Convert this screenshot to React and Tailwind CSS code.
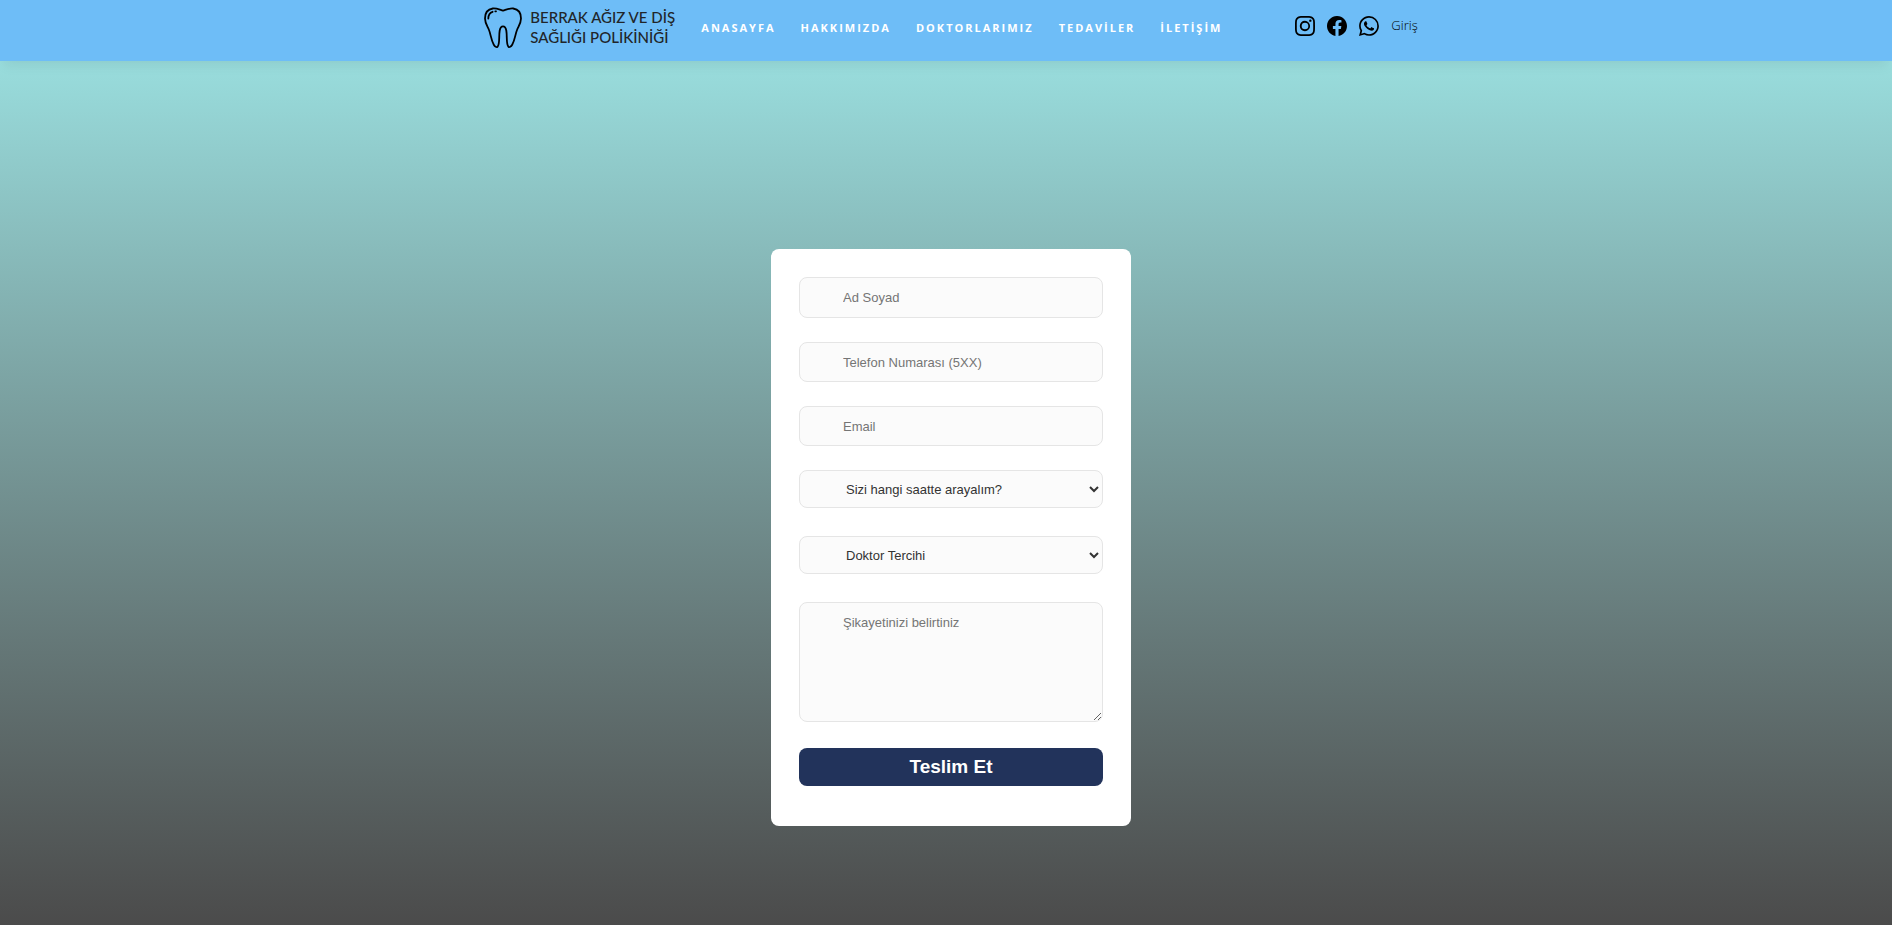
import { BsInstagram, BsFacebook, BsWhatsapp } from "react-icons/bs";

const links = ["ANASAYFA", "HAKKIMIZDA", "DOKTORLARIMIZ", "TEDAVİLER", "İLETİŞİM"];

const socials = [
  { label: "Instagram", Icon: BsInstagram },
  { label: "Facebook", Icon: BsFacebook },
  { label: "WhatsApp", Icon: BsWhatsapp },
];

const box = "w-full rounded-lg border border-[#e5e5e5] bg-[#fbfbfb] text-[13px] outline-none";
const field = `${box} px-[43px] placeholder:text-[#757575]`;
const picker = `${box} h-[38px] pl-[42px] text-[#333]`;

function Tooth() {
  return (
    <svg viewBox="0 0 38 42" className="h-[42px] w-[38px]" fill="none" stroke="#000" strokeWidth="1.8" strokeLinecap="round" strokeLinejoin="round" aria-hidden="true">
      <path d="M19 3.6C15.500 2.600 12 1.100 8.800 1.500C4 2.200 1 6 1 11.500C1 16 3.200 19 4.800 22.500C6.800 27 7 33 9.800 37.700C11 39.800 12.500 40.600 13.600 39.700C16 37.500 14.700 29 15.700 23.500C16.200 20.800 17.500 19.300 19 19.300C20.500 19.300 21.800 20.800 22.300 23.500C23.300 29 22 37.500 24.400 39.700C25.500 40.600 27 39.800 28.200 37.700C31 33 31.200 27 33.200 22.500C34.800 19 37 16 37 11.500C37 6 34 2.200 29.200 1.500C26 1.100 22.500 2.600 19 3.600Z" />
      <path d="M4.300 11.500C4.300 8 6 5.700 8.600 4.800M11.300 4.300L12 4.400" />
    </svg>
  );
}

function Header() {
  return (
    <header className="relative flex h-[61px] justify-center bg-[#6ebdf7] pl-[10px] shadow-[0_8px_12px_-4px_rgba(0,0,0,0.08)]">
      <div className="flex items-start">
        <a href="#" className="flex w-[217px] gap-2 pt-[7px] text-[#212529]">
          <Tooth />
          <span className="font-['Lato',sans-serif] text-[15px] leading-5 font-medium whitespace-nowrap">
            BERRAK AĞIZ VE DİŞ
            <br />
            SAĞLIĞI POLİKİNİĞİ
          </span>
        </a>
        <nav className="flex w-[594px] gap-[25px] pt-5 font-['Open_Sans',sans-serif] text-[11px] leading-4 font-bold tracking-[2px] text-white">
          {links.map((l) => (
            <a key={l} href="#">
              {l}
            </a>
          ))}
        </nav>
        <div className="flex gap-3 pt-4">
          {socials.map(({ label, Icon }) => (
            <a key={label} href="#" aria-label={label} className="text-black">
              <Icon className="size-5" />
            </a>
          ))}
          <a href="#" className="font-['Open_Sans',sans-serif] text-[13px] leading-[18px] font-light text-black">
            Giriş
          </a>
        </div>
      </div>
    </header>
  );
}

export default function App() {
  return (
    <div className="flex min-h-screen flex-col font-['Liberation_Sans',sans-serif]">
      <Header />
      <main className="flex flex-1 items-start justify-center bg-linear-to-b from-[#99dddd] to-[#4b4b4b] pt-[188px] pb-[99px] pl-[10px]">
        <form className="flex w-[360px] flex-col rounded-lg bg-white px-7 pt-7 pb-10" onSubmit={(e) => e.preventDefault()}>
          <div className="flex flex-col gap-6">
            <input type="text" aria-label="Ad Soyad" placeholder="Ad Soyad" className={`${field} h-[41px]`} />
            <input type="tel" aria-label="Telefon Numarası" placeholder="Telefon Numarası (5XX)" className={`${field} h-10`} />
            <input type="email" aria-label="Email" placeholder="Email" className={`${field} h-10`} />
          </div>
          <div className="mt-6 flex flex-col gap-7">
            <select aria-label="Arama saati" className={picker}>
              <option>Sizi hangi saatte arayalım?</option>
            </select>
            <select aria-label="Doktor" className={picker}>
              <option>Doktor Tercihi</option>
            </select>
            <textarea aria-label="Şikayet" placeholder="Şikayetinizi belirtiniz" className={`${field} h-[120px] resize py-3 leading-[15px]`} />
          </div>
          <button type="submit" className="mt-[26px] h-[38px] rounded-lg bg-[#22335b] text-[19px] leading-6 font-bold text-white">
            Teslim Et
          </button>
        </form>
      </main>
    </div>
  );
}
